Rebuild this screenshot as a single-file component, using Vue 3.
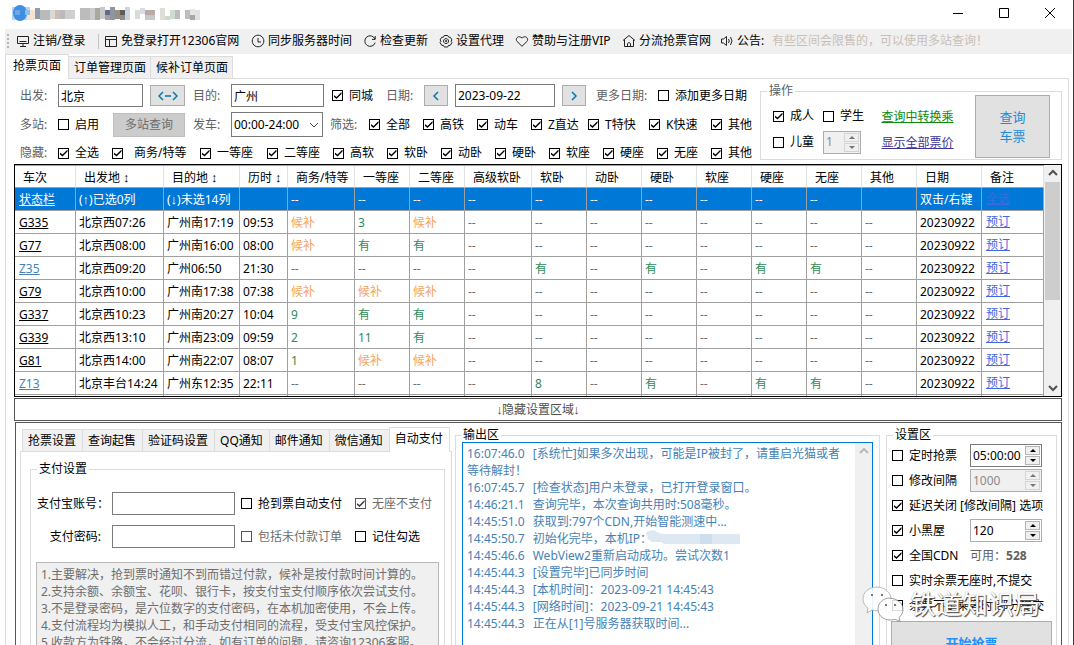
<script setup>
import { ref } from 'vue'

const mosaic = [
  [27, 10, 8, 10, '#f6e3d0'], [35, 8, 5, 11, '#8b9bb0'], [40, 10, 10, 10, '#b9bbb9'],
  [50, 10, 5, 9, '#d8d8d8'], [55, 10, 5, 9, '#cfbcae'], [60, 10, 5, 9, '#b9b9be'], [65, 10, 10, 9, '#cfcfcf'],
  [80, 8, 10, 12, '#bcbcbc'], [90, 8, 5, 12, '#cccccc'], [95, 8, 5, 12, '#a9a9a0'], [100, 7, 5, 12, '#c8c8c8'],
  [105, 10, 5, 5, '#666888'], [105, 15, 5, 5, '#a0a0ac'], [110, 7, 5, 13, '#8d97a2'], [115, 10, 5, 9, '#a08c7c'],
  [120, 10, 5, 5, '#5d5c58'], [120, 15, 5, 5, '#8d8d88'], [125, 7, 5, 13, '#cdd3de'], [135, 10, 5, 9, '#dadada'],
  [140, 8, 5, 6, '#d6dde0'], [145, 10, 10, 5, '#b8aaa4'], [145, 15, 10, 5, '#c8c8c4'], [160, 8, 5, 12, '#dedfd4'],
  [165, 16, 5, 4, '#d4d4d4'], [170, 10, 5, 9, '#d0dbcf'], [175, 10, 5, 9, '#bcbcc0'], [185, 10, 5, 9, '#bdbdbd'],
  [190, 15, 5, 5, '#a7a7a7'], [190, 9, 5, 6, '#e6e6e0'], [195, 10, 5, 10, '#dde1e8'],
]

const tools = [
  { icon: 'M1.5 2.5h11v7h-11z M3.5 7.5h7 M4 12.5h6 M7 10v2', text: '注销/登录', cls: 't1' },
  { icon: 'M1.5 2.5h11v10h-11z M1.5 5.5h11 M5.5 5.5v7', text: '免登录打开12306官网', cls: 't2' },
  { icon: 'M7 1.2a5.8 5.8 0 1 0 .1 0z M7 4v4h3', text: '同步服务器时间', cls: 't3' },
  { icon: 'M12 5A5.3 5.3 0 1 0 12.2 8.6 M12.2 2v3.4H9', text: '检查更新', cls: 't4' },
  { icon: 'M5.3 1.5h3.4l.8 1.6 1.8.2 1.7 2.7-1 1.2 1 1.3-1.7 2.8-1.8.1-.8 1.6H5.3l-.8-1.6-1.8-.1L1 8.5l1-1.3L1 6l1.7-2.7 1.8-.2z M7 4.6a2.5 2.5 0 1 0 .1 0z M6.6 6.6h1v1h-1z', text: '设置代理', cls: 't5' },
  { icon: 'M7 12.3L2 7.4C-.1 4.8 3.2.7 7 4c3.8-3.3 7.1.8 5 3.4z', text: '赞助与注册VIP', cls: 't6' },
  { icon: 'M1 6.5L7 1.5l6 5 M2.5 5.5v7h9v-7 M5.5 12.5v-3q1.5-2 3 0v3', text: '分流抢票官网', cls: 't7' },
  { icon: 'M1.5 5v4h2l3 2.5v-9L3.500 5z M8.500 5q1.500 2 0 4 M10.500 3q3 4 0 8', text: '公告:', cls: 't8' },
]

const filters = ['全部', '高铁', '动车', 'Z直达', 'T特快', 'K快速', '其他']
const hides = ['全选', '商务/特等', '一等座', '二等座', '高软', '软卧', '动卧', '硬卧', '软座', '硬座', '无座', '其他']

const widths = [61, 88, 76, 48, 67, 55, 55, 67, 55, 55, 55, 55, 55, 55, 55, 65]
const heads = ['车次', '出发地', '目的地', '历时', '商务/特等', '一等座', '二等座', '高级软卧', '软卧', '动卧', '硬卧', '软座', '硬座', '无座', '其他', '日期', '备注']
const n = '--', h = '候补', y = '有'
const trains = [
  ['G335', '北京西07:26', '广州南17:19', '09:53', h, '3', h, n, n, n, n, n, n, n, n],
  ['G77', '北京西08:00', '广州南16:00', '08:00', h, y, y, n, n, n, n, n, n, n, n],
  ['Z35', '北京西09:20', '广州06:50', '21:30', n, n, n, n, y, n, y, n, y, y, n],
  ['G79', '北京西10:00', '广州南17:38', '07:38', h, h, h, n, n, n, n, n, n, n, n],
  ['G337', '北京西10:23', '广州南20:27', '10:04', '9', y, y, n, n, n, n, n, n, n, n],
  ['G339', '北京西13:10', '广州南23:09', '09:59', '2', '11', y, n, n, n, n, n, n, n, n],
  ['G81', '北京西14:00', '广州南22:07', '08:07', '1', h, h, n, n, n, n, n, n, n, n],
  ['Z13', '北京丰台14:24', '广州东12:35', '22:11', n, n, n, n, '8', n, y, n, y, y, n],
]
const seatClass = (v) => (v === n ? 'none' : v === h ? 'wait' : 'ok')

const tabs = ['抢票设置', '查询起售', '验证码设置', 'QQ通知', '邮件通知', '微信通知', '自动支付']
const tips = ref(`1.主要解决，抢到票时通知不到而错过付款，候补是按付款时间计算的。
2.支持余额、余额宝、花呗、银行卡，按支付宝支付顺序依次尝试支付。
3.不是登录密码，是六位数字的支付密码，在本机加密使用，不会上传。
4.支付流程均为模拟人工，和手动支付相同的流程，受支付宝风控保护。
5.收款方为铁路，不会经过分流，如有订单的问题，请咨询12306客服。`)

const gap = '\u2004\u2004'
const logs = [
  ['16:07:46.0', '[系统忙]如果多次出现，可能是IP被封了，请重启光猫或者等待解封！'],
  ['16:07:45.7', '[检查状态]用户未登录，已打开登录窗口。'],
  ['14:46:21.1', '查询完毕，本次查询共用时:508毫秒。'],
  ['14:45:51.0', '获取到:797个CDN,开始智能测速中...'],
  ['14:45:50.7', '初始化完毕，本机IP：', true],
  ['14:45:46.6', 'WebView2重新启动成功。尝试次数1'],
  ['14:45:44.3', '[设置完毕]已同步时间'],
  ['14:45:44.3', '[本机时间]：2023-09-21 14:45:43'],
  ['14:45:44.3', '[网络时间]：2023-09-21 14:45:43'],
  ['14:45:44.3', '正在从[1]号服务器获取时间...'],
]
</script>

<template>
  <div class="window">
    <header class="titlebar">
      <svg class="brand" width="210" height="26" aria-hidden="true">
        <rect x="12" y="7" width="18" height="13" fill="#b4d4f5" />
        <rect v-for="(m, i) in mosaic" :key="i" :x="m[0]" :y="m[1]" :width="m[2]" :height="m[3]" :fill="m[4]" />
        <ellipse cx="20" cy="13" rx="7" ry="8" fill="#3f8ee0" />
        <rect x="15" y="10" width="5" height="5" fill="#69a8ea" />
        <rect x="25" y="10" width="5" height="5" fill="#8abdf0" />
      </svg>
      <div class="winbtns">
        <button aria-label="最小化"><svg width="12" height="12"><path d="M1 5.500h10" /></svg></button>
        <button aria-label="最大化"><svg width="12" height="12"><path d="M1.500 .5h9v9h-9z" /></svg></button>
        <button aria-label="关闭"><svg width="12" height="12"><path d="M1 0l10 10M11 0L1 10" /></svg></button>
      </div>
    </header>

    <nav class="toolbar">
      <span class="grip"></span>
      <button v-for="t in tools" :key="t.text" :class="['tool', t.cls]">
        <svg width="14" height="14" viewBox="0 0 14 14"><path :d="t.icon" /></svg>{{ t.text }}
      </button>
      <span class="notice">有些区间会限售的，可以使用多站查询！</span>
    </nav>

    <div class="pagetabs">
      <button class="ptab on">抢票页面</button>
      <button class="ptab">订单管理页面</button>
      <button class="ptab">候补订单页面</button>
    </div>

    <main class="page">
      <section class="search">
        <div class="filters">
          <div class="row r1">
            <label class="dim" for="from">出发:</label>
            <input id="from" class="box w85" type="text" value="北京" />
            <button class="btn w35" aria-label="交换"><svg width="20" height="10"><path d="M5 1L1 5l4 4M7 5h6M15 1l4 4-4 4" /></svg></button>
            <label class="dim" for="to">目的:</label>
            <input id="to" class="box w93" type="text" value="广州" />
            <label class="ck"><input type="checkbox" checked />同城</label>
            <label class="dim" for="date">日期:</label>
            <button class="btn w24" aria-label="前一天"><svg width="8" height="10"><path d="M6 1L2 5l4 4" /></svg></button>
            <input id="date" class="box w100" type="text" value="2023-09-22" />
            <button class="btn w24" aria-label="后一天"><svg width="8" height="10"><path d="M2 1l4 4-4 4" /></svg></button>
            <span class="dim">更多日期:</span>
            <label class="ck"><input type="checkbox" />添加更多日期</label>
          </div>
          <div class="row r2">
            <span class="dim">多站:</span>
            <label class="ck"><input type="checkbox" />启用</label>
            <button class="btn multi" disabled>多站查询</button>
            <label class="dim" for="time">发车:</label>
            <span class="selwrap">
              <select id="time" class="box"><option>00:00-24:00</option></select>
              <svg width="10" height="6"><path d="M1 1l4 4 4-4" /></svg>
            </span>
            <span class="dim">筛选:</span>
            <label v-for="f in filters" :key="f" class="ck"><input type="checkbox" checked />{{ f }}</label>
          </div>
          <div class="row r3">
            <span class="dim">隐藏:</span>
            <label v-for="f in hides" :key="f" :class="['ck', { wide: f.length > 4 }]"><input type="checkbox" checked />{{ f }}</label>
          </div>
        </div>
        <fieldset class="ops">
          <legend class="dim">操作</legend>
          <div class="opsbody">
            <div class="people">
              <label class="ck"><input type="checkbox" checked />成人</label>
              <label class="ck"><input type="checkbox" />学生</label>
              <label class="ck"><input type="checkbox" />儿童</label>
              <span class="spin off s38">
                <input type="text" value="1" aria-label="儿童人数" disabled />
                <span class="arrows"><button disabled aria-label="增加"></button><button class="down" disabled aria-label="减少"></button></span>
              </span>
            </div>
            <div class="links">
              <a href="#" class="green">查询中转换乘</a>
              <a href="#" class="indigo">显示全部票价</a>
            </div>
            <button class="btn query">查询<br />车票</button>
          </div>
        </fieldset>
      </section>

      <section class="grid">
        <div class="tablebox">
          <table>
            <colgroup>
              <col v-for="(w, i) in widths" :key="i" :style="{ width: w + 'px' }" />
              <col />
            </colgroup>
            <thead>
              <tr><th v-for="(t, i) in heads" :key="t">{{ t }}<span v-if="i > 0 && i < 4" class="sort">↕</span></th></tr>
            </thead>
            <tbody>
              <tr class="status">
                <td><a href="#">状态栏</a></td>
                <td>(<span class="arr">↑</span>)已选0列</td>
                <td>(<span class="arr">↓</span>)未选14列</td>
                <td></td>
                <td v-for="i in 10" :key="i">--</td>
                <td></td>
                <td>双击/右键</td>
                <td class="act"><a href="#">全选</a></td>
              </tr>
              <tr v-for="r in trains" :key="r[0]">
                <td><a href="#" :class="{ slow: r[0][0] === 'Z' }">{{ r[0] }}</a></td>
                <td>{{ r[1] }}</td>
                <td>{{ r[2] }}</td>
                <td>{{ r[3] }}</td>
                <td v-for="(s, i) in r.slice(4)" :key="i" :class="seatClass(s)">{{ s }}</td>
                <td>20230922</td>
                <td class="act"><a href="#">预订</a></td>
              </tr>
              <tr><td v-for="i in 17" :key="i"></td></tr>
            </tbody>
          </table>
        </div>
        <div class="scroll">
          <svg width="10" height="17"><path d="M1 10l4-4 4 4" /></svg>
          <span class="thumb"></span>
          <svg width="10" height="17"><path d="M1 7l4 4 4-4" /></svg>
        </div>
      </section>

      <button class="toggle"><span class="arr">↓</span>隐藏设置区域<span class="arr">↓</span></button>

      <section class="bottom">
        <div class="left">
          <div class="stabs">
            <button v-for="(t, i) in tabs" :key="t" :class="['stab', { on: i === 6 }]">{{ t }}</button>
          </div>
          <div class="spage">
            <fieldset class="pay">
              <legend>支付设置</legend>
              <div class="payrow">
                <label for="acc">支付宝账号：</label>
                <input id="acc" class="box" type="text" />
                <label class="ck"><input type="checkbox" />抢到票自动支付</label>
                <label class="ck gray"><input type="checkbox" checked disabled />无座不支付</label>
              </div>
              <div class="payrow">
                <label for="pwd">支付密码:</label>
                <input id="pwd" class="box" type="password" />
                <label class="ck gray"><input type="checkbox" disabled />包括未付款订单</label>
                <label class="ck"><input type="checkbox" />记住勾选</label>
              </div>
              <textarea v-model="tips" class="tips" aria-label="支付说明" readonly></textarea>
            </fieldset>
          </div>
        </div>

        <fieldset class="output">
          <legend>输出区</legend>
          <div class="logbox">
            <div class="log">
              <p v-for="(l, i) in logs" :key="i">{{ l[0] + gap + l[1] }}<svg v-if="l[2]" class="mask" width="94" height="14"><path d="M0 2l7-2 8 4h79v10H18l-3-2H6l-4-3z" fill="#dde8f3" /><path d="M54 4h12v10H54z" fill="#cfdeed" /></svg></p>
            </div>
            <div class="scroll faint"><svg width="10" height="17"><path d="M1 10l4-4 4 4" /></svg></div>
          </div>
        </fieldset>

        <fieldset class="settings">
          <legend>设置区</legend>
          <div class="srow">
            <label class="ck"><input type="checkbox" />定时抢票</label>
            <span class="spin dark s72">
              <input type="text" value="05:00:00" aria-label="定时" />
              <span class="arrows"><button aria-label="增加"></button><button class="down" aria-label="减少"></button></span>
            </span>
          </div>
          <div class="srow">
            <label class="ck"><input type="checkbox" />修改间隔</label>
            <span class="spin off s72">
              <input type="text" value="1000" aria-label="间隔" disabled />
              <span class="arrows"><button disabled aria-label="增加"></button><button class="down" disabled aria-label="减少"></button></span>
            </span>
          </div>
          <div class="srow">
            <label class="ck"><input type="checkbox" checked />延迟关闭 [修改间隔] 选项</label>
          </div>
          <div class="srow">
            <label class="ck"><input type="checkbox" checked />小黑屋</label>
            <span class="spin s72">
              <input type="text" value="120" aria-label="小黑屋时长" />
              <span class="arrows"><button aria-label="增加"></button><button class="down" aria-label="减少"></button></span>
            </span>
          </div>
          <div class="srow">
            <label class="ck"><input type="checkbox" checked />全国CDN</label>
            <span class="cdn">可用：<b>528</b></span>
          </div>
          <div class="srow"><label class="ck"><input type="checkbox" />实时余票无座时,不提交</label></div>
          <div class="srow"><label class="ck"><input type="checkbox" />余票不足乘客时,部分提交</label></div>
          <button class="btn start">开始抢票</button>
          <div class="badge">
            <svg width="42" height="36" viewBox="0 0 42 36">
              <path d="M15 1C7 1 1 6 1 13c0 4 2 7 5 9l-1 5 5-3c2 .6 4 .8 6 .8C23 24 29 19 29 13S23 1 15 1z" fill="#fff" fill-opacity=".9" stroke="#aaa" stroke-width=".8" />
              <path d="M28 12c-7 0-12 5-12 11s5 11 12 11c2 0 3-.2 5-.7l5 2-1-4c3-2 4-5 4-8 0-6-6-11-13-11z" fill="#fff" fill-opacity=".85" stroke="#888" stroke-width=".8" />
              <path d="M9 9h2M19 9h2M23 19h2M32 19h2" stroke="#777" stroke-width="2" />
            </svg>
            <span>铁道知识局</span>
          </div>
        </fieldset>
      </section>
    </main>
  </div>
</template>

<style>
html, body { background: #fff; overflow: hidden; }
</style>

<style scoped>
* { box-sizing: border-box; }
.window {
  height: 100vh; display: flex; flex-direction: column; overflow: hidden;
  padding: 0 0 0 5px; border-right: 1px solid #3a3a3a; background: #fff; color: #000;
  font: 12px/16px "Noto Sans", "Noto Sans CJK SC", sans-serif; white-space: nowrap;
}
button, input, select, textarea { font: inherit; color: inherit; margin: 0; padding: 0; border-radius: 0; outline: 0; }
button { background: none; border: 0; display: flex; align-items: center; justify-content: center; }
svg { display: block; fill: none; stroke: #222; flex: none; }
.arr, .sort { font-family: "Liberation Sans", sans-serif; font-size: 13px; line-height: 12px; }
.sort { margin-left: 3px; }
.titlebar { flex: 0 0 29px; display: flex; justify-content: space-between; margin-left: -5px; }
.brand { stroke: none; }
.winbtns { display: flex; height: 27px; }
.winbtns button { width: 46px; }
.winbtns svg { stroke: #000; }

.toolbar { flex: 0 0 25px; display: flex; align-items: center; background: #f0f0f0; margin-right: 1px; padding-bottom: 1px; }
.grip { width: 2px; height: 15px; margin-left: 2px; background: repeating-linear-gradient(#b4b4b4 0 2px, #f0f0f0 2px 4px); }
.tool { gap: 3px; height: 20px; justify-content: flex-start; flex: none; }
.t1 { width: 74px; margin-left: 7px; }
.t2 { width: 149px; padding-left: 5px; border-left: 1px solid #c4c4c4; margin-left: 8px; height: 15px; }
.t3 { width: 112px; margin-left: 4px; }
.t4 { width: 76px; }
.t5 { width: 76px; }
.t6 { width: 107px; }
.t7 { width: 98px; }
.t8 { width: 52px; }
.notice { color: #c9bfb5; }

.pagetabs { display: flex; align-items: flex-end; flex: 0 0 24px; }
.ptab { height: 22px; padding: 0 4px 0 5px; background: #f0f0f0; border: 1px solid #dcdcdc; border-width: 1px 1px 0 0; }
.ptab.on { height: 25px; margin-bottom: -1px; padding: 0 7px 2px; background: #fff; border-left-width: 1px; z-index: 1; }
.page { flex: 1; min-height: 0; display: flex; flex-direction: column; border: 1px solid #dcdcdc; border-bottom: 0; margin-right: 4px; padding: 2px 6px 0 8px; }

.search { display: flex; flex: 0 0 83px; min-height: 0; padding-left: 6px; }
.filters { flex: 0 0 740px; }
.row { display: grid; align-items: center; height: 29px; }
.r1 { grid-template-columns: 38px 92px 43px 38px 101px 54px 38px 31px 107px 34px 62px auto; }
.r2 { grid-template-columns: 38px 55px 80px 38px 99px 39px 54px 54px 54px 57px 61px 62px auto; }
.r3 { grid-template-columns: 38px 54px 88px 67px 66px repeat(7, 54px) auto; height: 25px; padding-top: 3px; }
.dim { color: #606060; }
.box { height: 23px; border: 1px solid #7a7a7a; background: #fff; padding: 0 2px; }
.w85 { width: 85px; } .w93 { width: 93px; } .w100 { width: 100px; }
.btn { background: #e1e1e1; border: 1px solid #adadad; height: 21px; }
.btn svg { stroke: #0078a8; stroke-width: 1.5; }
.w35 { width: 35px; } .w24 { width: 24px; }
.multi { width: 72px; height: 24px; background: #ccc; border-color: #bfbfbf; color: #6d6d6d; }
.selwrap { display: grid; width: 92px; align-items: center; }
.selwrap > * { grid-area: 1 / 1; }
.selwrap select { appearance: none; width: 100%; height: 25px; }
.selwrap svg { justify-self: end; margin-right: 4px; stroke: #444; }
.ck { display: inline-flex; align-items: center; gap: 6px; }
.ck.wide { gap: 11px; }
.ck input { appearance: none; width: 11px; height: 11px; border: 1px solid #000; background: #fff; display: grid; place-items: center; flex: none; }
.ck input:checked::after { content: ""; width: 8px; height: 7px; background: #000; clip-path: polygon(0 38%, 38% 72%, 100% 0, 100% 28%, 38% 100%, 0 66%); }
.ck.gray { color: #6d6d6d; }
.ck.gray input { border-color: #555; }
.ck.gray input:checked::after { background: #333; }

fieldset { margin: 0; padding: 0; border: 1px solid #dcdcdc; min-width: 0; }
legend { padding: 0 2px; margin-left: 6px; height: 16px; }
.ops { flex: 1; margin-top: 2px; height: 77px; }
.opsbody { display: flex; padding: 0 11px 0 12px; justify-content: space-between; height: 59px; margin-top: -4px; }
.people { display: grid; grid-template-columns: 50px auto; grid-template-rows: 26px 26px; align-items: center; padding-top: 8px; }
.links { display: grid; grid-template-rows: 26px 26px; align-items: center; padding-top: 9px; margin-right: 4px; }
.green { color: #0a8a0a; } .indigo { color: #3c3494; }
.query { width: 75px; height: 63px; font-size: 13px; line-height: 19px; color: #1e8cd8; }
.spin { display: flex; align-items: center; height: 23px; border: 1px solid #abadb3; background: #fff; padding: 1px; }
.spin input { flex: 1; min-width: 0; width: 0; border: 0; background: none; padding-left: 1px; }
.spin.dark { border-color: #7a7a7a; }
.spin.off { background: #f0f0f0; color: #8a8a8a; }
.s38 { width: 38px; } .s72 { width: 72px; }
.arrows { display: flex; flex-direction: column; gap: 1px; width: 15px; }
.arrows button { height: 9px; border: 1px solid #b4b4b4; background: #f0f0f0; }
.arrows button::after { content: ""; border: 3px solid transparent; border-top-width: 0; border-bottom-color: #000; }
.arrows .down::after { border-width: 3px 3px 0; border-top-color: #000; }
.off .arrows button { border-color: #d4d4d4; }
.off .arrows button::after { border-bottom-color: #777; }
.off .arrows .down::after { border-top-color: #777; }

.grid { flex: 0 0 233px; display: flex; border: 1px solid #000; overflow: hidden; }
.tablebox { flex: 1; min-width: 0; overflow: hidden; border-top: 1px solid #a0a0a0; }
table { table-layout: fixed; width: 100%; border-spacing: 0; }
th { font-weight: normal; text-align: left; height: 22px; padding: 2px 0 0 8px; border-right: 1px solid #e2e2e2; border-bottom: 1px solid #a0a0a0; }
td { height: 23px; padding: 2px 0 0 3px; border-right: 1px solid #a0a0a0; border-bottom: 1px solid #a0a0a0; }
td:first-child { padding-left: 4px; }
td.act { padding: 0 0 0 4px; }
th, td { overflow: hidden; }
td a { color: #000; }
td a.slow { color: #4682b4; }
td.act a { color: #4169e1; }
.status td { background: #0078d7; color: #fff; }
.status td a { color: #fff; }
.status td.act a { color: #4169e1; }
.none { color: #6d6d6d; } .wait { color: #f4a460; } .ok { color: #2e8b57; }
.scroll { flex: 0 0 17px; display: flex; flex-direction: column; align-items: center; background: #f0f0f0; }
.scroll svg { stroke: #505050; stroke-width: 2; }
.scroll .thumb { width: 15px; height: 118px; background: #cdcdcd; margin-bottom: auto; }
.faint svg { stroke: #b8b8b8; }
.toggle { flex: 0 0 23px; margin: 1px 0; border: 1px solid #555; color: #505050; }
.toggle .arr { width: 5px; display: flex; justify-content: center; }

.bottom { flex: 1; min-height: 0; display: flex; border: 1px solid #555; border-bottom: 0; margin-left: 1px; padding: 4px 4px 0; overflow: hidden; }
.left { flex: 0 0 432px; display: flex; flex-direction: column; }
.stabs { display: flex; align-items: flex-end; height: 25px; padding-left: 2px; }
.stab { height: 22px; padding: 0 6px 0 5px; background: #f0f0f0; border: 1px solid #dcdcdc; border-width: 1px 0 0 1px; }
.stab.on { height: 25px; margin-bottom: -1px; padding-bottom: 2px; background: #fff; border-right-width: 1px; z-index: 1; }
.spage { flex: 1; border: 1px solid #dcdcdc; border-bottom: 0; padding: 9px 6px 0 9px; }
.pay { height: 260px; }
.payrow { display: grid; grid-template-columns: 74px 129px 114px auto; align-items: center; height: 33px; padding-left: 7px; }
.payrow:nth-of-type(1) { margin-top: 10px; }
.payrow .box { width: 123px; }
.payrow > label:first-child { justify-self: end; margin-right: 3px; }
.payrow > label[for="pwd"] { margin-right: 11px; }
.tips { display: block; width: calc(100% - 10px); margin: 9px 5px 0; height: 140px; resize: none; border: 1px solid #b8b8b8; background: #f0f0f0; color: #6d6d6d; padding: 3px 4px; line-height: 17px; overflow: hidden; white-space: pre; }
.output { flex: 1; margin: 0 6px 0 3px; height: 260px; }
.output legend { margin-left: 5px; }
.logbox { display: flex; border: 1px solid #0078d7; margin: -1px 6px 0; height: 230px; }
.log { flex: 1; padding: 2px 10px 2px 4px; line-height: 17px; color: #4682b4; white-space: pre-wrap; }
.log p { margin: 0; }
.mask { display: inline-block; stroke: none; vertical-align: top; margin-left: -6px; }
.settings { flex: 0 0 171px; height: 260px; position: relative; }
.srow { display: flex; align-items: center; justify-content: space-between; height: 25px; padding: 0 14px 0 5px; }
.cdn { width: 72px; color: #606060; }
.start { width: calc(100% - 8px); margin: 3px 4px 0; height: 44px; color: #1e90ff; font-weight: bold; font-size: 13px; }
.badge { position: absolute; left: -25px; top: 143px; display: flex; align-items: center; gap: 6px; color: #fff; font-size: 26px; line-height: 36px; text-shadow: 1px 1px 1px #444, 0 0 1px #999; pointer-events: none; }
</style>
